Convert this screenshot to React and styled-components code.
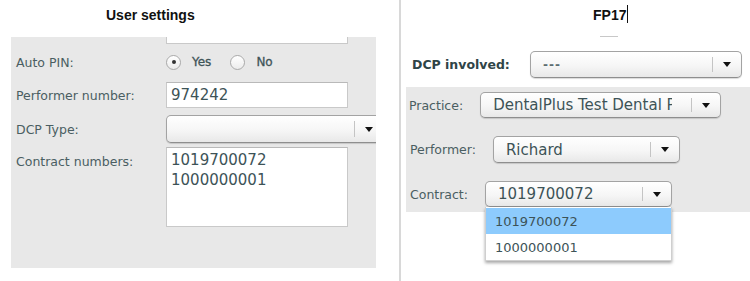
import React from "react";
import styled, { createGlobalStyle } from "styled-components";

const GlobalStyle = createGlobalStyle`
  html, body {
    margin: 0;
    padding: 0;
    background: #ffffff;
  }
  body {
    width: 750px;
    height: 281px;
    overflow: hidden;
  }
`;

const Page = styled.div`
  display: flex;
  width: 750px;
  height: 281px;
  font-family: "DejaVu Sans", "Liberation Sans", sans-serif;
`;

const Column = styled.div`
  display: flex;
  flex-direction: column;
  width: ${(p) => p.$width}px;
  box-sizing: border-box;
  border-left: ${(p) => (p.$divided ? "2px solid #d8d8d8" : "none")};
`;

const Title = styled.div`
  height: 37px;
  box-sizing: border-box;
  padding-left: ${(p) => p.$indent}px;
  padding-top: 7px;
  font-family: "Liberation Sans", Arial, sans-serif;
  font-weight: bold;
  font-size: 14px;
  color: #111;
  display: flex;
  align-items: flex-start;
`;

const Caret = styled.span`
  display: inline-block;
  width: 1px;
  height: 18px;
  background: #111;
  margin-left: 1px;
  margin-top: -2px;
`;

const SettingsPanel = styled.div`
  margin-left: 11px;
  width: 365px;
  height: 231px;
  background: #e8e8e8;
  overflow: hidden;
  box-sizing: border-box;
  padding-left: 5px;
  display: flex;
  flex-direction: column;
`;

const FormRow = styled.div`
  display: grid;
  grid-template-columns: 150px 1fr;
  align-items: ${(p) => (p.$top ? "start" : "center")};
  height: ${(p) => p.$height}px;
  margin-top: ${(p) => p.$gap || 0}px;
`;

const Label = styled.div`
  font-size: 12.5px;
  color: #4a5e62;
  white-space: nowrap;
  padding-top: ${(p) => p.$pad || 0}px;
`;

const TextBox = styled.div`
  width: 182px;
  height: ${(p) => p.$height}px;
  box-sizing: border-box;
  background: #fff;
  border: 1px solid #c9c9c9;
  border-top: ${(p) => (p.$cut ? "none" : "1px solid #b9b9b9")};
  padding: 2px 4px;
  font-size: 15px;
  line-height: 20px;
  color: #3d5357;
`;

const RadioGroup = styled.div`
  display: flex;
  align-items: center;
  gap: 10px;
`;

const RadioOption = styled.div`
  display: flex;
  align-items: center;
  gap: 11px;
  font-size: 12px;
  color: #3f5458;
  margin-right: 9px;
  -webkit-text-stroke: 0.3px #3f5458;
`;

const RadioCircle = styled.span`
  width: 15px;
  height: 15px;
  box-sizing: border-box;
  border-radius: 50%;
  border: 1px solid #a9a9a9;
  background: linear-gradient(#ffffff, #ececec);
  display: flex;
  align-items: center;
  justify-content: center;
  &::after {
    content: "";
    width: 4px;
    height: 4px;
    border-radius: 50%;
    background: ${(p) => (p.$checked ? "#333" : "transparent")};
  }
`;

const SelectWrap = styled.div`
  position: relative;
  width: ${(p) => p.$width}px;
  flex: none;
`;

const SelectBox = styled.div`
  display: flex;
  align-items: center;
  width: 100%;
  height: ${(p) => p.$height}px;
  box-sizing: border-box;
  border: 1px solid #a3a3a3;
  border-bottom-color: #8e8e8e;
  border-radius: 5px;
  background: linear-gradient(#ffffff 0%, #f6f6f6 55%, #e8e8e8 100%);
  box-shadow: 0 1px 1px rgba(0, 0, 0, 0.15);
  overflow: hidden;
`;

const SelectValue = styled.span`
  flex: 1;
  min-width: 0;
  overflow: hidden;
  white-space: nowrap;
  padding-left: 12px;
  margin-right: ${(p) => p.$trim || 5}px;
  font-size: ${(p) => p.$size}px;
  color: #3d5357;
`;

const SelectDivider = styled.span`
  width: 1px;
  height: 62%;
  background: #c4c4c4;
`;

const SelectArrow = styled.span`
  width: 28px;
  display: flex;
  justify-content: center;
  &::after {
    content: "";
    border-left: 4px solid transparent;
    border-right: 4px solid transparent;
    border-top: 5px solid #111;
  }
`;

const Options = styled.div`
  position: absolute;
  top: 100%;
  left: 0;
  right: 0;
  background: #fff;
  border: 1px solid #cfcfcf;
  border-top: none;
  box-shadow: 0 2px 3px rgba(0, 0, 0, 0.35);
  padding-top: 1px;
  z-index: 2;
`;

const OptionItem = styled.div`
  height: 26px;
  display: flex;
  align-items: center;
  padding-left: 9px;
  font-size: 13px;
  color: #3d5357;
  background: ${(p) => (p.$active ? "#8dcbfd" : "#fff")};
`;

const ScrollStub = styled.div`
  height: 0;
  position: relative;
  &::before {
    content: "";
    position: absolute;
    left: 199px;
    top: -1px;
    width: 18px;
    height: 1px;
    background: #c8c8c8;
  }
`;

const InvolvedRow = styled.div`
  display: flex;
  align-items: center;
  height: 50px;
  box-sizing: border-box;
  padding: 5px 0 0 11px;
`;

const StrongLabel = styled.div`
  width: 118px;
  font-size: 12.5px;
  font-weight: bold;
  color: #2f4447;
`;

const DashValue = styled.span`
  flex: 1;
  padding-left: 12px;
  font-size: 12px;
  font-weight: bold;
  color: #5d6d70;
  letter-spacing: 1px;
`;

const GreyBlock = styled.div`
  margin-left: 5px;
  background: #e8e8e8;
  height: 125px;
  box-sizing: border-box;
  padding: 5px 0 5px 3px;
  display: flex;
  flex-direction: column;
  gap: 18px;
`;

const FieldRow = styled.div`
  display: flex;
  align-items: center;
  gap: 17px;
  padding-left: ${(p) => p.$shift || 0}px;
`;

function Select({ width, height, value, size = 15, trim, children }) {
  return (
    <SelectWrap $width={width}>
      <SelectBox $height={height}>
        <SelectValue $size={size} $trim={trim}>
          {value}
        </SelectValue>
        <SelectDivider />
        <SelectArrow />
      </SelectBox>
      {children}
    </SelectWrap>
  );
}

export default function App() {
  return (
    <Page>
      <GlobalStyle />
      <Column $width={399}>
        <Title $indent={106}>User settings</Title>
        <SettingsPanel>
          <FormRow $height={7}>
            <span />
            <TextBox $height={7} $cut />
          </FormRow>
          <FormRow $height={20} $gap={8}>
            <Label>Auto PIN:</Label>
            <RadioGroup>
              <RadioOption>
                <RadioCircle $checked />
                Yes
              </RadioOption>
              <RadioOption>
                <RadioCircle />
                No
              </RadioOption>
            </RadioGroup>
          </FormRow>
          <FormRow $height={26} $gap={10}>
            <Label>Performer number:</Label>
            <TextBox $height={26}>974242</TextBox>
          </FormRow>
          <FormRow $height={28} $gap={7}>
            <Label>DCP Type:</Label>
            <Select width={218} height={28} value="" />
          </FormRow>
          <FormRow $height={80} $gap={4} $top>
            <Label $pad={7}>Contract numbers:</Label>
            <TextBox $height={80}>
              1019700072
              <br />
              1000000001
            </TextBox>
          </FormRow>
        </SettingsPanel>
      </Column>
      <Column $width={351} $divided>
        <Title $indent={192}>
          FP17
          <Caret />
        </Title>
        <ScrollStub />
        <InvolvedRow>
          <StrongLabel>DCP involved:</StrongLabel>
          <SelectWrap $width={212}>
            <SelectBox $height={27}>
              <DashValue>---</DashValue>
              <SelectDivider />
              <SelectArrow />
            </SelectBox>
          </SelectWrap>
        </InvolvedRow>
        <GreyBlock>
          <FieldRow>
            <Label>Practice:</Label>
            <Select
              width={241}
              height={26}
              trim={19}
              value="DentalPlus Test Dental Practice"
            />
          </FieldRow>
          <FieldRow $shift={1}>
            <Label>Performer:</Label>
            <Select width={187} height={27} value="Richard" />
          </FieldRow>
          <FieldRow $shift={1}>
            <Label>Contract:</Label>
            <Select width={187} height={26} value="1019700072">
              <Options>
                <OptionItem $active>1019700072</OptionItem>
                <OptionItem>1000000001</OptionItem>
              </Options>
            </Select>
          </FieldRow>
        </GreyBlock>
      </Column>
    </Page>
  );
}
